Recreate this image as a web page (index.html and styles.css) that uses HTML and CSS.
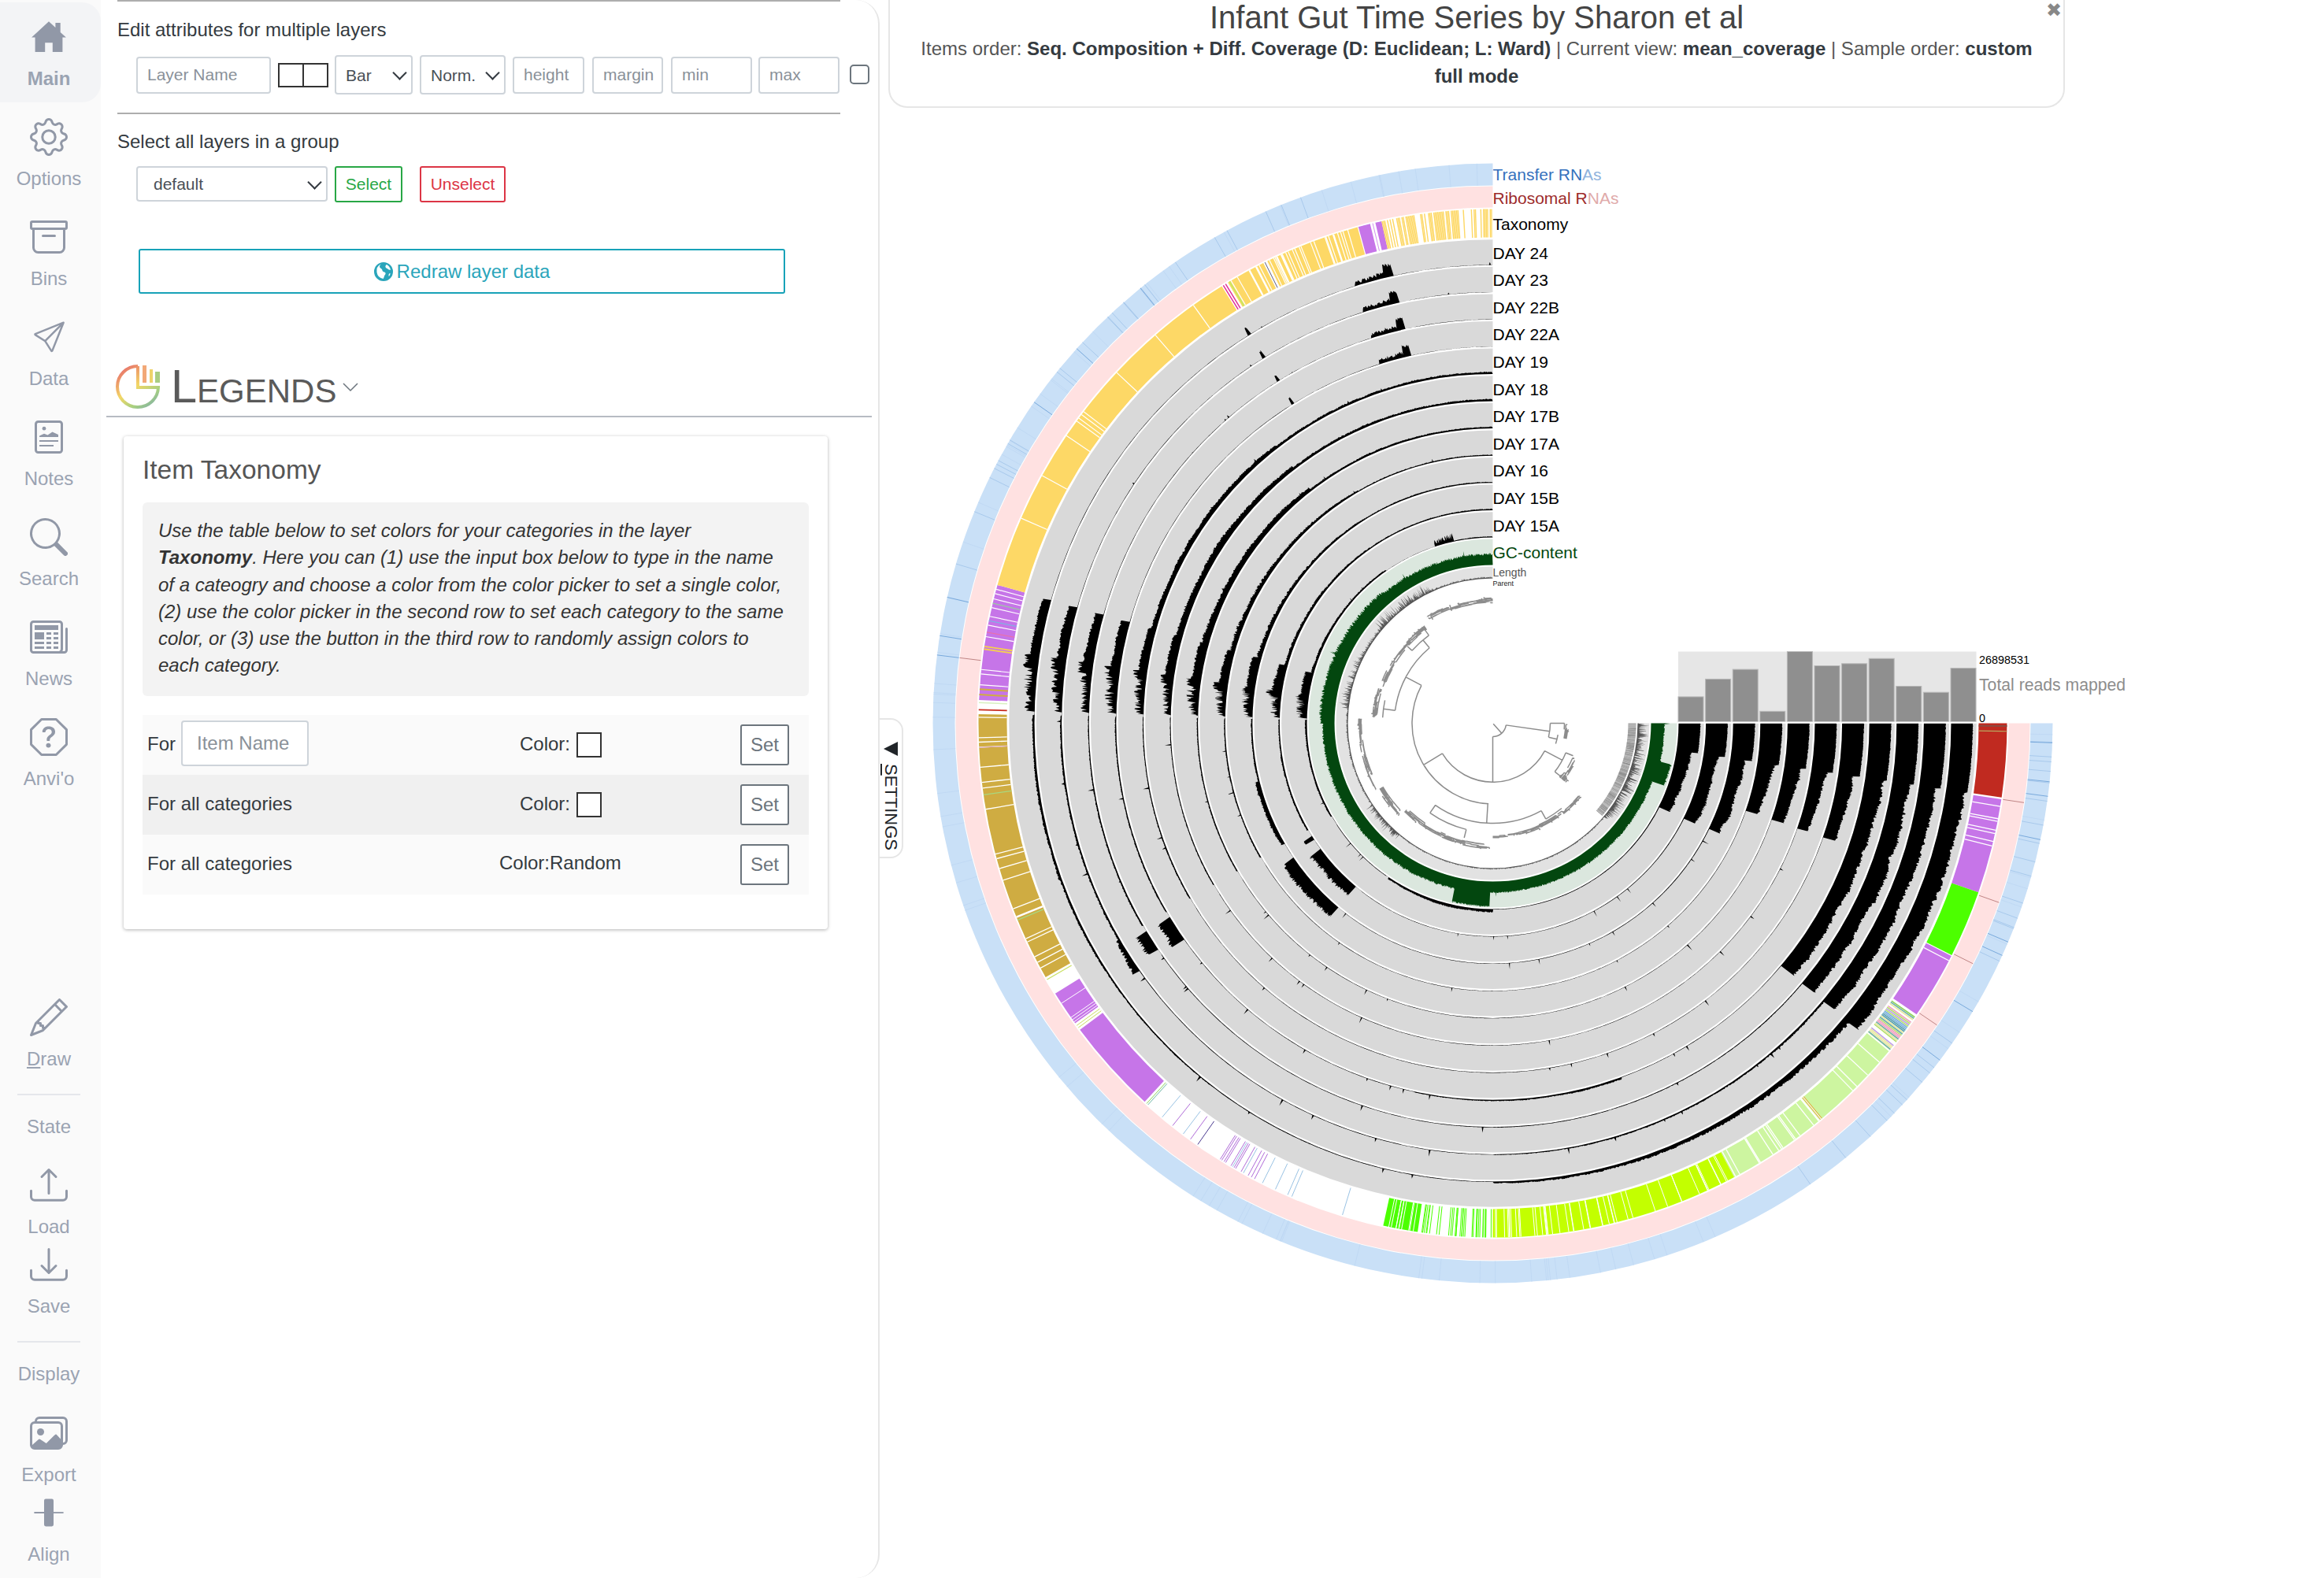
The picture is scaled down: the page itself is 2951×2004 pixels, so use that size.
FILE: index.html
```html
<!DOCTYPE html>
<html lang="en">
<head>
  <meta charset="UTF-8">
  <title>Infant Gut Time Series by Sharon et al</title>
  <link rel="stylesheet" href="styles.css">
</head>
<body>
<div class="page">
  <nav class="nav">
    <div class="navGroup">
      <a class="navItem active">
        <svg class="icon" viewBox="0 0 16 16"><path d="M2.200 14.300V8.200H.7L8 1.400l2.800 2.600V2h2.100v4l2.400 2.200h-1.500v6.100H9.600V10.400H6.400v3.900z"/></svg>
        <span>Main</span>
      </a>
      <a class="navItem">
        <svg class="icon" viewBox="0 0 16 16"><path d="M8 4.754a3.246 3.246 0 1 0 0 6.492 3.246 3.246 0 0 0 0-6.492zM5.754 8a2.246 2.246 0 1 1 4.492 0 2.246 2.246 0 0 1-4.492 0z"/><path d="M9.796 1.343c-.527-1.79-3.065-1.79-3.592 0l-.094.319a.873.873 0 0 1-1.255.52l-.292-.16c-1.64-.892-3.433.902-2.54 2.541l.159.292a.873.873 0 0 1-.52 1.255l-.319.094c-1.79.527-1.79 3.065 0 3.592l.319.094a.873.873 0 0 1 .52 1.255l-.16.292c-.892 1.64.901 3.434 2.541 2.54l.292-.159a.873.873 0 0 1 1.255.52l.094.319c.527 1.79 3.065 1.79 3.592 0l.094-.319a.873.873 0 0 1 1.255-.52l.292.16c1.64.893 3.434-.902 2.54-2.541l-.159-.292a.873.873 0 0 1 .52-1.255l.319-.094c1.79-.527 1.79-3.065 0-3.592l-.319-.094a.873.873 0 0 1-.52-1.255l.16-.292c.893-1.64-.902-3.433-2.541-2.54l-.292.159a.873.873 0 0 1-1.255-.52l-.094-.319zm-2.633.283c.246-.835 1.428-.835 1.674 0l.094.319a1.873 1.873 0 0 0 2.693 1.115l.291-.16c.764-.415 1.6.42 1.184 1.185l-.159.292a1.873 1.873 0 0 0 1.116 2.692l.318.094c.835.246.835 1.428 0 1.674l-.319.094a1.873 1.873 0 0 0-1.115 2.693l.16.291c.415.764-.42 1.6-1.185 1.184l-.291-.159a1.873 1.873 0 0 0-2.693 1.116l-.094.318c-.246.835-1.428.835-1.674 0l-.094-.319a1.873 1.873 0 0 0-2.692-1.115l-.292.16c-.764.415-1.6-.42-1.184-1.185l.159-.291A1.873 1.873 0 0 0 1.945 8.93l-.319-.094c-.835-.246-.835-1.428 0-1.674l.319-.094A1.873 1.873 0 0 0 3.06 4.377l-.16-.292c-.415-.764.42-1.6 1.185-1.184l.292.159a1.873 1.873 0 0 0 2.692-1.115l.094-.319z"/></svg>
        <span>Options</span>
      </a>
      <a class="navItem">
        <svg class="icon" viewBox="0 0 16 16"><path d="M0 2a1 1 0 0 1 1-1h14a1 1 0 0 1 1 1v2a1 1 0 0 1-1 1v7.500a2.500 2.500 0 0 1-2.500 2.500h-9A2.500 2.500 0 0 1 1 12.500V5a1 1 0 0 1-1-1V2zm2 3v7.500A1.500 1.500 0 0 0 3.500 14h9a1.500 1.500 0 0 0 1.500-1.500V5H2zm13-3H1v2h14V2zM5 7.500a.5.5 0 0 1 .5-.5h5a.5.5 0 0 1 0 1h-5a.5.5 0 0 1-.5-.5z"/></svg>
        <span>Bins</span>
      </a>
      <a class="navItem">
        <svg class="icon" viewBox="0 0 16 16"><g transform="translate(1.5 1.5) scale(.82)"><path d="M15.854.146a.5.5 0 0 1 .11.54l-5.819 14.547a.75.75 0 0 1-1.329.124l-3.178-4.995L.643 7.184a.75.75 0 0 1 .124-1.33L15.314.037a.5.5 0 0 1 .54.11ZM6.636 10.070l2.761 4.338L14.130 2.576 6.636 10.070Zm6.787-8.201L1.591 6.602l4.339 2.760 7.494-7.493Z"/></g></svg>
        <span>Data</span>
      </a>
      <a class="navItem">
        <svg class="icon" viewBox="0 0 16 16"><path d="M3.500 1h9A1.500 1.500 0 0 1 14 2.500v11a1.500 1.500 0 0 1-1.500 1.500h-9A1.500 1.500 0 0 1 2 13.500v-11A1.500 1.500 0 0 1 3.500 1zm0 1a.5.5 0 0 0-.5.5v11a.5.5 0 0 0 .5.5h9a.5.5 0 0 0 .5-.5v-11a.5.5 0 0 0-.5-.5h-9z"/><circle cx="6" cy="4.400" r=".8"/><path d="M4 7.500l2-.9 1.500.6 2-1.400 2.500 1.200v1H4zM4 9.300h8v.7H4zM4 11.300h6v.7H4z"/></svg>
        <span>Notes</span>
      </a>
      <a class="navItem">
        <svg class="icon" viewBox="0 0 16 16"><path d="M11.742 10.344a6.500 6.500 0 1 0-1.397 1.398h-.001c.030.040.062.078.098.115l3.850 3.850a1 1 0 0 0 1.415-1.414l-3.850-3.850a1.007 1.007 0 0 0-.115-.1zM12 6.500a5.500 5.500 0 1 1-11 0 5.500 5.500 0 0 1 11 0z"/></svg>
        <span>Search</span>
      </a>
      <a class="navItem">
        <svg class="icon" viewBox="0 0 16 16"><path d="M0 2.500A1.500 1.500 0 0 1 1.500 1h11A1.500 1.500 0 0 1 14 2.500v10.528c0 .3-.05.654-.238.972h.738a.5.5 0 0 0 .5-.5v-9a.5.5 0 0 1 1 0v9a1.500 1.500 0 0 1-1.500 1.500H1.497A1.497 1.497 0 0 1 0 13.500v-11zM12 14c.37 0 .654-.211.853-.441.092-.106.147-.279.147-.531V2.500a.5.5 0 0 0-.5-.5h-11a.5.5 0 0 0-.5.5v11c0 .278.223.5.497.5H12z"/><path d="M2 3h10v2H2V3zm0 3h4v3H2V6zm0 4h4v1H2v-1zm0 2h4v1H2v-1zm5-6h2v1H7V6zm3 0h2v1h-2V6zM7 8h2v1H7V8zm3 0h2v1h-2V8zm-3 2h2v1H7v-1zm3 0h2v1h-2v-1zm-3 2h2v1H7v-1zm3 0h2v1h-2v-1z"/></svg>
        <span>News</span>
      </a>
      <a class="navItem">
        <svg class="icon" viewBox="0 0 16 16"><path d="M4.540.146A.5.5 0 0 1 4.893 0h6.214a.5.5 0 0 1 .353.146l4.394 4.394a.5.5 0 0 1 .146.353v6.214a.5.5 0 0 1-.146.353l-4.394 4.394a.5.5 0 0 1-.353.146H4.893a.5.5 0 0 1-.353-.146L.146 11.460A.5.5 0 0 1 0 11.107V4.893a.5.5 0 0 1 .146-.353L4.540.146zM5.100 1 1 5.100v5.800L5.100 15h5.800l4.100-4.100V5.100L10.900 1H5.100z"/><path d="M5.255 5.786a.237.237 0 0 0 .241.247h.825c.138 0 .248-.113.266-.25.090-.656.540-1.134 1.342-1.134.686 0 1.314.343 1.314 1.168 0 .635-.374.927-.965 1.371-.673.489-1.206 1.060-1.168 1.987l.003.217a.25.25 0 0 0 .25.246h.811a.25.25 0 0 0 .25-.25v-.105c0-.718.273-.927 1.010-1.486.609-.463 1.244-.977 1.244-2.056 0-1.511-1.276-2.241-2.673-2.241-1.267 0-2.655.59-2.750 2.286zm1.557 5.763c0 .533.425.927 1.010.927.609 0 1.028-.394 1.028-.927 0-.552-.42-.94-1.029-.94-.584 0-1.009.388-1.009.94z"/></svg>
        <span>Anvi'o</span>
      </a>
    </div>
    <div class="navGroup bottom">
      <a class="navItem small">
        <svg class="icon" viewBox="0 0 16 16"><path d="M12.146.146a.5.5 0 0 1 .708 0l3 3a.5.5 0 0 1 0 .708l-10 10a.5.5 0 0 1-.168.11l-5 2a.5.5 0 0 1-.65-.65l2-5a.5.5 0 0 1 .11-.168l10-10zM11.207 2.500 13.500 4.793 14.793 3.500 12.500 1.207 11.207 2.500zm1.586 3L10.500 3.207 4 9.707V10h.5a.5.5 0 0 1 .5.5v.5h.5a.5.5 0 0 1 .5.5v.5h.293l6.500-6.500zm-9.761 5.175-.106.106-1.528 3.821 3.821-1.528.106-.106A.5.5 0 0 1 5 12.500V12h-.5a.5.5 0 0 1-.5-.5V11h-.5a.5.5 0 0 1-.468-.325z"/></svg>
        <span><u>D</u>raw</span>
      </a>
      <hr class="navLine">
      <div class="navTitle state">State</div>
      <a class="navItem small">
        <svg class="icon" viewBox="0 0 16 16"><path d="M.5 9.900a.5.5 0 0 1 .5.5v2.500a1 1 0 0 0 1 1h12a1 1 0 0 0 1-1v-2.500a.5.5 0 0 1 1 0v2.500a2 2 0 0 1-2 2H2a2 2 0 0 1-2-2v-2.500a.5.5 0 0 1 .5-.5z"/><path d="M7.646 1.146a.5.5 0 0 1 .708 0l3 3a.5.5 0 0 1-.708.708L8.500 2.707V11.500a.5.5 0 0 1-1 0V2.707L5.354 4.854a.5.5 0 1 1-.708-.708l3-3z"/></svg>
        <span>Load</span>
      </a>
      <a class="navItem small">
        <svg class="icon" viewBox="0 0 16 16"><path d="M.5 9.900a.5.5 0 0 1 .5.5v2.500a1 1 0 0 0 1 1h12a1 1 0 0 0 1-1v-2.500a.5.5 0 0 1 1 0v2.500a2 2 0 0 1-2 2H2a2 2 0 0 1-2-2v-2.500a.5.5 0 0 1 .5-.5z"/><path d="M7.646 11.854a.5.5 0 0 0 .708 0l3-3a.5.5 0 0 0-.708-.708L8.500 10.293V1.500a.5.5 0 0 0-1 0v8.793L5.354 8.146a.5.5 0 1 0-.708.708l3 3z"/></svg>
        <span>Save</span>
      </a>
      <hr class="navLine">
      <div class="navTitle display">Display</div>
      <a class="navItem small">
        <svg class="icon" viewBox="0 0 16 16"><path d="M4.502 9a1.500 1.500 0 1 0 0-3 1.500 1.500 0 0 0 0 3z"/><path d="M14.002 13a2 2 0 0 1-2 2h-10a2 2 0 0 1-2-2V5A2 2 0 0 1 2 3a2 2 0 0 1 2-2h10a2 2 0 0 1 2 2v8a2 2 0 0 1-1.998 2zM14 2H4a1 1 0 0 0-1 1h9.002a2 2 0 0 1 2 2v7A1 1 0 0 0 15 11V3a1 1 0 0 0-1-1zM2.002 4a1 1 0 0 0-1 1v8l2.646-2.354a.5.5 0 0 1 .63-.062l2.660 1.773 3.710-3.710a.5.5 0 0 1 .577-.094l1.777 1.947V5a1 1 0 0 0-1-1h-10z"/><path d="M1 13.500l2.800-2.500 2.800 1.800 3.800-3.800L13 11.200V14H1.500z"/></svg>
        <span>Export</span>
      </a>
      <a class="navItem small">
        <svg class="icon" viewBox="0 0 16 16"><path d="M6 2.900a.7.7 0 0 1 .7-.7h2.600a.7.7 0 0 1 .7.7v10.200a.7.7 0 0 1-.7.7H6.700a.7.7 0 0 1-.7-.7V8.300H1.800v-.6H6V2.900z"/><path d="M10 7.700h4.200v.6H10z"/></svg>
        <span>Align</span>
      </a>
    </div>
  </nav>

  <section class="panel">
    <div class="block">
      <hr class="rule top">
      <div class="blockTitle">Edit attributes for multiple layers</div>
      <div class="multiRow">
        <input class="field nameField" placeholder="Layer Name">
        <span class="splitBox"><i></i><i></i></span>
        <span class="selectWrap barSel"><select class="field"><option>Bar</option></select></span>
        <span class="selectWrap normSel"><select class="field"><option>Norm.</option></select></span>
        <input class="field heightField" placeholder="height">
        <input class="field marginField" placeholder="margin">
        <input class="field minField" placeholder="min">
        <input class="field maxField" placeholder="max">
        <span class="checkBox"></span>
      </div>
      <hr class="rule">
      <div class="blockTitle second">Select all layers in a group</div>
      <div class="groupRow">
        <span class="selectWrap groupSel"><select class="field"><option>default</option></select></span>
        <button class="btn selectBtn">Select</button>
        <button class="btn unselectBtn">Unselect</button>
      </div>
      <button class="btn redrawBtn">
        <svg class="globe" viewBox="0 0 16 16"><path d="M8 0a8 8 0 1 0 0 16A8 8 0 0 0 8 0zM5.800 1.500c-.5.7-1.200 1.400-1.100 2.400.1 1 1.100 1.300 1.800 1.900.6.600.3 1.400 1 2 .8.600 1.800.5 2.200 1.300.3.800-.5 1.500-.9 2.200-.3.600-.5 2.200-1.100 2.700a6.700 6.700 0 0 1-1.900-12.500zM10.500 2c1.700.800 3 2.400 3.500 4.300-.6.400-1.500.2-2-.3-.7-.8-1.900-.9-2.300-1.900-.3-.8.200-1.500.8-2.100zM13.800 9.500c-.2.900-.6 1.700-1.200 2.500-.4-.8-.3-1.800.2-2.400.3-.2.700-.2 1-.1z"/></svg>
        Redraw layer data
      </button>
    </div>

    <div class="legendHead">
      <svg class="legendLogo" viewBox="0 0 58 58">
        <defs>
          <linearGradient id="logoGrad" x1="0.2" y1="0" x2="0.9" y2="1">
            <stop offset="0" stop-color="#e8736b"/>
            <stop offset="0.45" stop-color="#f3d766"/>
            <stop offset="0.75" stop-color="#a8d080"/>
            <stop offset="1" stop-color="#7fb0a8"/>
          </linearGradient>
        </defs>
        <path d="M29 3A26 26 0 1 0 55 30H29V3" fill="none" stroke="url(#logoGrad)" stroke-width="4"/>
        <rect x="35" y="2" width="5" height="22" fill="#f2a877"/>
        <rect x="44" y="7" width="4" height="17" fill="#eed36a"/>
        <rect x="51" y="10" width="6" height="14" fill="#a9cd82"/>
      </svg>
      <h2 class="legendTitle">Legends</h2>
      <svg class="legendChevron" viewBox="0 0 20 12"><path d="M1 1l9 9 9-9" fill="none" stroke="#6c757d" stroke-width="1.500"/></svg>
    </div>
    <hr class="rule legendRule">

    <div class="card">
      <h3 class="cardTitle">Item Taxonomy</h3>
      <div class="info">
        Use the table below to set colors for your categories in the layer<br>
        <b>Taxonomy</b>. Here you can (1) use the input box below to type in the name<br>
        of a cateogry and choose a color from the color picker to set a single color,<br>
        (2) use the color picker in the second row to set each category to the same<br>
        color, or (3) use the button in the third row to randomly assign colors to<br>
        each category.
      </div>
      <div class="colorTable">
        <div class="colorRow">
          <div class="forCell">For <input class="field itemField" placeholder="Item Name"></div>
          <div class="colorCell">Color: <span class="swatch"></span></div>
          <div><button class="btn setBtn">Set</button></div>
        </div>
        <div class="colorRow even">
          <div class="forCell">For all categories</div>
          <div class="colorCell">Color: <span class="swatch"></span></div>
          <div><button class="btn setBtn">Set</button></div>
        </div>
        <div class="colorRow">
          <div class="forCell">For all categories</div>
          <div class="colorCell random">Color:Random</div>
          <div><button class="btn setBtn">Set</button></div>
        </div>
      </div>
    </div>
  </section>

  <main class="main">
    <div class="settingsTab">
      <span class="tabArrow"></span>
      <span class="tabText"><u>S</u>ETTINGS</span>
    </div>
    <header class="titleBox">
      <h1 class="title">Infant Gut Time Series by Sharon et al</h1>
      <p class="sub">Items order: <b>Seq. Composition + Diff. Coverage (D: Euclidean; L: Ward)</b> | Current view: <b>mean_coverage</b> | Sample order: <b>custom</b><br><b>full mode</b></p>
      <span class="closeBtn">&#10006;</span>
    </header>
    <svg id="tree" class="tree" viewBox="1117 137 1834 1867"></svg>
  </main>
</div>
<script src="chart.js"></script>
</body>
</html>
```
FILE: styles.css
```css
* {
  box-sizing: border-box;
}

html, body {
  margin: 0;
  height: 100%;
  background-color: #fff;
}

body {
  font-family: "Liberation Sans", Arial, sans-serif;
  font-size: 24px;
  color: #343a40;
  overflow: hidden;
}

.page {
  display: flex;
  height: 2004px;
}

/* left icon bar */
.nav {
  width: 128px;
  flex: none;
  background-color: #fafafa;
  display: flex;
  flex-direction: column;
  justify-content: space-between;
  padding: 3px 0 15px;
  color: #9aa3b2;
}

.navGroup {
  display: flex;
  flex-direction: column;
  align-items: center;
  padding-right: 4px;
}

.navItem {
  width: 100%;
  height: 127px;
  padding-top: 20px;
  display: flex;
  flex-direction: column;
  align-items: center;
  line-height: 30px;
  gap: 14px;
}

.navItem.small {
  height: 92px;
  padding-top: 0;
}

.navItem.small + .navItem.small {
  margin-top: 9px;
}

.navItem.active {
  width: 128px;
  margin-right: -4px;
  padding-right: 4px;
  background-color: #f3f4f6;
  border-radius: 0 24px 24px 0;
  font-weight: bold;
}

.icon {
  width: 48px;
  height: 48px;
  fill: #9198a7;
  flex: none;
}

.navLine {
  width: 80px;
  height: 2px;
  margin: 29px 0 0;
  border: 0;
  background-color: #e5e7eb;
}

.navTitle {
  line-height: 30px;
  margin-top: 25px;
}

.navTitle.state {
  margin-bottom: 35px;
}

.navTitle.display {
  margin-bottom: 36px;
}

/* settings panel */
.panel {
  width: 989px;
  flex: none;
  padding-left: 7px;
  border-right: 2px solid #e6e6e6;
  border-radius: 0 30px 30px 0;
}

.block {
  margin-left: 14px;
  width: 918px;
}

.rule {
  height: 2px;
  margin: 0;
  border: 0;
  background-color: #adadad;
}

.blockTitle {
  line-height: 30px;
  margin-top: 21px;
}

.blockTitle.second {
  margin-top: 20px;
}

.multiRow {
  height: 50px;
  margin: 17px 0 23px;
  padding-left: 24px;
  display: flex;
  align-items: center;
  position: relative;
}

.field {
  height: 47px;
  border: 2px solid #ced4da;
  border-radius: 4px;
  background-color: #fff;
  font-family: inherit;
  font-size: 21px;
  color: #495057;
  padding: 0 0 0 12px;
  outline: none;
}

.field::placeholder {
  color: #8a9199;
  opacity: 1;
}

select.field {
  appearance: none;
  width: 100%;
  height: 100%;
}

.groupSel select.field {
  padding-left: 20px;
}

.nameField { width: 171px; margin-right: 9px; }
.heightField { width: 91px; margin-right: 10px; }
.marginField { width: 90px; margin-right: 10px; }
.minField { width: 103px; margin-right: 8px; }
.maxField { width: 103px; }

.splitBox {
  width: 64px;
  height: 31px;
  margin-right: 8px;
  display: flex;
  border: 2px solid #333;
}

.splitBox i {
  flex: 1;
}

.splitBox i + i {
  border-left: 2px solid #333;
}

.selectWrap {
  position: relative;
  display: block;
}

.selectWrap::after {
  content: '';
  position: absolute;
  right: 10px;
  top: 50%;
  width: 11px;
  height: 11px;
  margin-top: -9px;
  border-right: 2px solid #343a40;
  border-bottom: 2px solid #343a40;
  transform: rotate(45deg);
}

.barSel { width: 99px; height: 50px; margin-right: 9px; }
.normSel { width: 109px; height: 50px; margin-right: 9px; }
.groupSel { width: 243px; height: 45px; margin-right: 9px; }

.checkBox {
  position: absolute;
  left: 930px;
  top: 12px;
  width: 25px;
  height: 25px;
  border: 2px solid #6c757d;
  border-radius: 5px;
}

.groupRow {
  height: 45px;
  margin-top: 16px;
  padding-left: 24px;
  display: flex;
  align-items: center;
}

.btn {
  background-color: #fff;
  border: 2px solid #6c757d;
  border-radius: 3px;
  font-family: inherit;
  font-size: 21px;
  color: #6c757d;
  padding: 0;
}

.selectBtn {
  width: 86px;
  height: 46px;
  margin-right: 22px;
  border-color: #28a745;
  color: #28a745;
}

.unselectBtn {
  width: 109px;
  height: 46px;
  border-color: #dc3545;
  color: #dc3545;
}

.redrawBtn {
  display: flex;
  align-items: center;
  justify-content: center;
  gap: 5px;
  width: 821px;
  height: 57px;
  margin: 60px 0 0 27px;
  border-color: #17a2b8;
  color: #2aa5bb;
  font-size: 24px;
}

.globe {
  width: 24px;
  height: 24px;
  fill: #2aa5bb;
}

.legendHead {
  height: 58px;
  margin: 89px 0 8px 11px;
  display: flex;
  align-items: center;
}

.legendLogo {
  width: 58px;
  height: 58px;
  margin-right: 13px;
}

.legendTitle {
  margin: -1px 0 0;
  font-size: 59.5px;
  line-height: 58px;
  font-weight: normal;
  font-variant: small-caps;
  color: #5a5a5a;
}

.legendChevron {
  width: 20px;
  height: 12px;
  margin: 2px 0 0 8px;
}

.legendRule {
  width: 972px;
  background-color: #b7bbc3;
}

.card {
  width: 894px;
  height: 626px;
  margin: 24px 0 0 22px;
  padding: 23px 24px 0;
  border-radius: 4px;
  background-color: #fff;
  box-shadow: 0 1px 4px rgba(0, 0, 0, 0.3);
}

.cardTitle {
  margin: 0;
  font-size: 33.5px;
  line-height: 40px;
  font-weight: normal;
  color: #555;
}

.info {
  height: 246px;
  margin-top: 21px;
  padding: 19px 16px 0 20px;
  background-color: #f3f3f3;
  border-radius: 6px;
  font-style: italic;
  line-height: 34.3px;
  color: #333;
}

.colorTable {
  margin-top: 24px;
}

.colorRow {
  height: 76px;
  display: grid;
  grid-template-columns: 453px 306px 87px;
  align-items: center;
  background-color: #fafafa;
}

.colorRow.even {
  background-color: #f0f0f0;
}

.forCell {
  margin-top: -2px;
  padding-left: 6px;
  display: flex;
  align-items: center;
  gap: 7px;
}

.colorCell {
  margin-top: -2px;
  padding-left: 26px;
  display: flex;
  align-items: center;
  gap: 8px;
}

.colorCell.random {
  margin-top: -5px;
  padding-left: 0;
}

.itemField {
  width: 162px;
  height: 58px;
  margin-top: -2px;
  font-size: 24px;
  padding: 0 18px;
}

.swatch {
  width: 32px;
  height: 32px;
  margin-top: 2px;
  background-color: #fff;
  border: 2px solid #333;
}

.setBtn {
  display: block;
  width: 62px;
  height: 52px;
  font-size: 24px;
}

/* drawing area */
.main {
  flex: 1;
  position: relative;
}

.settingsTab {
  position: absolute;
  left: 0;
  top: 912px;
  z-index: 2;
  width: 30px;
  height: 178px;
  padding-top: 28px;
  background-color: #fff;
  border: 2px solid #e6e6e6;
  border-left: 0;
  border-radius: 0 16px 16px 0;
  display: flex;
  flex-direction: column;
  align-items: center;
  gap: 10px;
}

.tabArrow {
  width: 0;
  height: 0;
  border-style: solid;
  border-width: 9px 18px 9px 0;
  border-color: transparent #212529 transparent transparent;
}

.tabText {
  writing-mode: vertical-rl;
  font-size: 22px;
  line-height: 22px;
  color: #212529;
}

.titleBox {
  position: relative;
  width: 1494px;
  height: 137px;
  margin-left: 11px;
  padding: 0 35px;
  border: 2px solid #e6e6e6;
  border-top: 0;
  border-radius: 0 0 24px 24px;
  text-align: center;
}

.title {
  margin: 0;
  font-size: 40px;
  line-height: 44px;
  font-weight: normal;
  color: #444;
}

.sub {
  margin: 0;
  line-height: 35px;
  color: #555;
}

.sub b {
  color: #343a40;
}

.closeBtn {
  position: absolute;
  right: 2px;
  top: 0;
  font-family: "DejaVu Sans", sans-serif;
  font-size: 24px;
  line-height: 26px;
  color: #888;
}

.tree {
  display: block;
  width: 1834px;
  height: 1867px;
  font-family: "Liberation Sans", Arial, sans-serif;
}
```
FILE: chart.js
```js
// circular phylogram, drawn from the numbers below
const svg = document.getElementById('tree')
const NS = 'http://www.w3.org/2000/svg'
const cx = 1895.5
const cy = 918.5

let seed = 4711
function rnd() {
  seed = (seed * 16807) % 2147483647
  return seed / 2147483647
}

function pt(r, a) {
  const t = a * Math.PI / 180
  return (cx + r * Math.cos(t)).toFixed(2) + ' ' + (cy + r * Math.sin(t)).toFixed(2)
}

function add(tag, attrs) {
  const el = document.createElementNS(NS, tag)
  for (const k in attrs) el.setAttribute(k, attrs[k])
  svg.append(el)
  return el
}

function wedge(r0, r1, a0, a1) {
  const large = a1 - a0 > 180 ? 1 : 0
  return 'M' + pt(r1, a0) + 'A' + r1 + ' ' + r1 + ' 0 ' + large + ' 1 ' + pt(r1, a1) +
    'L' + pt(r0, a1) + 'A' + r0 + ' ' + r0 + ' 0 ' + large + ' 0 ' + pt(r0, a0) + 'Z'
}

function fillWedge(r0, r1, a0, a1, color) {
  add('path', { d: wedge(r0, r1, a0, a1), fill: color })
}

function radials(r0, r1, angles, color, width) {
  let d = ''
  angles.forEach(a => { d += 'M' + pt(r0, a) + 'L' + pt(r1, a) })
  add('path', { d: d, stroke: color, 'stroke-width': width, fill: 'none' })
}

function randomAngles(a0, a1, n) {
  const out = []
  for (let i = 0; i < n; i++) out.push(a0 + rnd() * (a1 - a0))
  return out
}

// ---- outer rings
fillWedge(683, 711, 0, 270, '#c9e0f7')
radials(683, 711, randomAngles(0, 270, 90), '#bcd6f2', 0.7)
radials(683, 711, randomAngles(0, 60, 26).concat(randomAngles(195, 250, 24)), '#a0c3e8', 0.8)
radials(683, 711, [2, 6, 7.5, 12, 23, 24.5, 31, 37, 187, 189, 193, 215, 222, 231], '#6fa3d8', 0.9)

fillWedge(655, 682, 0, 270, '#ffe1e1')
radials(655, 682, [8.5, 19.5, 26.6, 34.2, 187], '#b87a7a', 0.9)

// ---- taxonomy ring
const T0 = 617
const T1 = 653
const PURPLE = '#c675e8'
const YELLOW = '#fdd866'
const GOLD = '#cfac42'
const LIME = '#c3ff00'
const PALE = '#cdf5a0'
const GREEN = '#4cff00'

const sections = [
  [0, 8.3, '#c02a20'],
  [8.5, 19.2, PURPLE],
  [19.2, 26.8, GREEN],
  [26.9, 34.5, PURPLE],
  [39.4, 62, PALE],
  [62, 90, LIME],
  [98.4, 102.3, GREEN],
  [132.6, 143.4, PURPLE],
  [144.3, 148.3, PURPLE],
  [150.4, 181, GOLD],
  [182.6, 195.6, PURPLE],
  [195.6, 238.2, YELLOW],
  [239, 243.5, YELLOW],
  [244, 254.8, YELLOW],
  [254.8, 256.2, PURPLE],
  [256.8, 257.5, PURPLE]
]
sections.forEach(s => fillWedge(T0, T1, s[0], s[1], s[2]))

const lineSets = [
  [[0.9], '#b8a860', 1.2],
  [[0.3], '#8a4a40', 2],
  [[9.3, 10.7, 11, 12, 12.4, 13.3, 13.8, 27.5], '#fff', 1.3],
  [randomAngles(39.5, 55, 10).concat(randomAngles(50, 62, 12)), '#fff', 1.3],
  [randomAngles(62, 90, 36).concat(randomAngles(80, 90, 10)), '#fff', 1],
  [[50.2, 50.4], '#e8a030', 1],
  [randomAngles(90, 98.4, 32), GREEN, 1],
  [randomAngles(98.4, 102.3, 10), '#fff', 1],
  [[107, 113, 113.5, 115, 116.6, 119, 120.4, 127, 130], '#7fb2dc', 0.8],
  [[117.6, 118, 118.4, 119.3, 120, 120.2, 120.6, 121.3, 121.5, 121.8, 122, 126, 128.5], '#b06cd8', 1],
  [[125], '#4a3a90', 1],
  [[132.3], '#8ed45a', 1],
  [[132.1], '#70b8a8', 1],
  [[144.5, 144.8, 145.1, 147], '#fff', 1],
  [[143.7, 144], '#c8e060', 1],
  [[150.1], '#c8e060', 1.2],
  [randomAngles(151, 181, 20), '#fff', 1.3],
  [[172, 157.5], '#a8d880', 1.2],
  [[177.3], '#d8a0b0', 1],
  [[181.5], '#c82a1e', 1.8],
  [[181.9], '#fff', 1],
  [[182.3], '#d8f0c0', 1.5],
  [[183.2, 183.8], GOLD, 2],
  [[184.3, 185.5, 186, 189.7, 191, 192, 193, 194, 194.6, 195.1], '#fff', 1.2],
  [[188.3, 188.6], '#f5cf50', 1.8],
  [[190.2], '#f070a0', 1],
  [[191.5], '#70c0e0', 1],
  [[193.5], '#90e090', 1],
  [[203.5, 208.8, 214, 216, 216.4, 216.9, 217.3, 223, 229, 234.4], '#fff', 1.2],
  [randomAngles(239, 243.5, 8), '#fff', 1.2],
  [randomAngles(244, 254.8, 26), '#fff', 1.2],
  [[238.4, 238.7], '#e0309a', 1.5],
  [[239.2], '#c8e860', 2],
  [[243.7], '#5a5a80', 1]
]
lineSets.forEach(l => radials(T0, T1, l[0], l[1], l[2]))

// mixed stripes
const mix = ['#7fb2dc', '#8ed45a', '#f0a0c0', '#6fb0a8', '#b8e070', '#c0a0e8', '#e8e8a0', '#5aa0b0', '#fff']
for (let a = 34.6; a < 39.4; a += 0.18) {
  fillWedge(T0, T1, a, a + 0.15, mix[Math.floor(rnd() * mix.length)])
}
// sparse yellow near the end
for (let a = 257.5; a < 270; a += 0.15) {
  if (rnd() < (a > 266 ? 0.45 : 0.72)) fillWedge(T0, T1, a, a + 0.13, YELLOW)
}
radials(T0, T1, [255.5, 256.5, 257.1], PURPLE, 0.8)

// ---- one band: a polygon whose outer edge follows the values
function band(r0, r1, color, valueAt, step) {
  const depth = r1 - r0
  let d = 'M' + pt(r0, 0)
  for (let a = 0; a <= 270; a += step) {
    d += 'L' + pt(r0 + depth * Math.min(1, valueAt(a)), a)
  }
  d += 'L' + pt(r0, 270) + 'A' + r0 + ' ' + r0 + ' 0 1 0 ' + pt(r0, 0) + 'Z'
  add('path', { d: d, fill: color })
}

function look(segs, a) {
  for (let i = 0; i < segs.length; i++) {
    const s = segs[i]
    if (a >= s[0] && a < s[1]) {
      const t = (a - s[0]) / (s[1] - s[0])
      return { h: s[2] + (s[3] - s[2]) * t, n: s[4] || 0.14 }
    }
  }
  return { h: 0.005, n: 0.3 }
}

const SPIKY = 1.3
function sameStart(end, h) {
  return [[0, 8.3, 0.86, 0.84, 0.03], [8.3, end, h, h - 0.12, 0.16]]
}
const leftBlock = [
  [181.5, 187, 0.22, 0.3, SPIKY],
  [187, 188.5, 0.46, 0.5, 0.5],
  [188.5, 195.6, 0.36, 0.32, 0.25]
]
// small peaks that the four outer samples share
const peaks = [[237.8, 238.2, 0.28, 0.28, 0.3], [252.5, 256.4, 0.14, 0.18, 0.9], [256.4, 257.5, 0.46, 0.42, 0.3]]

// DAY 15A first, DAY 24 last
const layers = [
  sameStart(26.7, 0.6).concat([[26.7, 90, 0.03, 0.015], [90, 124, 0.12, 0.07, 0.4], [125, 147, 0.02, 0.02], [150, 181, 0.06, 0.07, 0.5], [195.6, 235, 0.1, 0.05, 0.5], [252, 258, 0.16, 0.24, 1], [258, 270, 0.03, 0.04, 0.5]]),
  sameStart(26.5, 0.6).concat([[26.5, 90, 0.025, 0.01], [90, 128, 0.012, 0.012], [130, 143.8, 0.46, 0.52, 0.3], [147, 148, 0.36, 0.36], [150, 181, 0.06, 0.05, 0.5], [195.6, 235, 0.12, 0.06, 0.5], [235, 270, 0.05, 0.05, 0.5]]),
  sameStart(26, 0.6).concat([[26, 90, 0.025, 0.01], [90, 128, 0.012, 0.012], [130, 146, 0.48, 0.52, 0.3], [150, 166, 0.16, 0.18, 0.4], [166, 181, 0.07, 0.05, 0.5], [195.6, 238, 0.16, 0.06, 0.5], [238, 270, 0.05, 0.04, 0.5]]),
  sameStart(19, 0.6).concat([[19, 90, 0.012, 0.01], [90, 148, 0.012, 0.012], [150, 181, 0.05, 0.04, 0.5], [195.6, 240, 0.2, 0.06, 0.5], [240, 270, 0.04, 0.04, 0.5]]),
  sameStart(19, 0.6).concat([[19, 90, 0.01, 0.01], [90, 148, 0.012, 0.012], [150, 181, 0.05, 0.04, 0.5], [195.6, 232, 0.26, 0.16, 0.3], [232, 270, 0.08, 0.06, 0.4]]),
  sameStart(19, 0.6).concat([[19, 90, 0.01, 0.01], [90, 148, 0.012, 0.012], [150, 181, 0.04, 0.03, 0.5], [195.6, 232, 0.26, 0.16, 0.3], [232, 270, 0.1, 0.08, 0.4]]),
  sameStart(19, 0.6).concat([[19, 100, 0.01, 0.01], [100, 148, 0.012, 0.012], [150, 181, 0.05, 0.03, 0.5], [195.6, 232, 0.22, 0.14, 0.3], [232, 270, 0.1, 0.08, 0.4]]),
  sameStart(40, 0.72).concat(peaks, [[40, 70, 0.012, 0.012], [70, 102, 0.08, 0.03, 0.4], [102, 145, 0.012, 0.012], [145, 149, 0.56, 0.56, 0.3], [150, 181, 0.05, 0.04, 0.5], [195.6, 237, 0.012, 0.01]]),
  sameStart(40, 0.72).concat(peaks, [[40, 90, 0.03, 0.02, 0.5], [90, 145, 0.015, 0.02], [146, 149, 0.46, 0.46, 0.4], [150, 181, 0.06, 0.04, 0.5], [195.6, 237, 0.012, 0.01]]),
  sameStart(40, 0.72).concat(peaks, [[40, 90, 0.08, 0.03, 0.5], [90, 145, 0.015, 0.02], [145, 150, 0.26, 0.16, 0.6], [150, 181, 0.08, 0.06, 0.5], [195.6, 237, 0.012, 0.01]]),
  sameStart(40, 0.72).concat(peaks, [[40, 90, 0.24, 0.06, 0.4], [90, 128, 0.015, 0.03], [128, 160, 0.04, 0.08, 0.5], [160, 181, 0.1, 0.08, 0.5], [195.6, 237, 0.012, 0.01]])
]

layers.forEach((segs, k) => {
  const r0 = 236 + 34.6 * k
  const r1 = r0 + 32.3
  const all = segs.concat(leftBlock)
  let walk = 0
  fillWedge(r0, r1, 0, 270, '#d9d9d9')
  band(r0, r1, '#000', a => {
    const v = look(all, a)
    walk = walk * 0.97 + (rnd() - 0.5) * 0.06
    let h = v.h * (1 - v.n / 2 + v.n * rnd()) * (1 + (a > 8.3 ? walk : 0))
    if (a > 26 && a < 181 && rnd() < 0.006) h = Math.max(h, 0.1 + 0.2 * rnd())
    if (a > 195 && rnd() < 0.005) h += 0.12 * rnd()
    return h
  }, 0.12)
})

// ---- GC-content
fillWedge(201, 234, 0, 270, '#dbe7de')
const gcSegs = [
  [0, 13, 0.52, 0.52, 0.12], [13, 20, 0.94, 0.92, 0.08], [20, 91, 0.44, 0.42, 0.16],
  [91, 103, 0.96, 0.94, 0.08], [103, 180, 0.44, 0.46, 0.2], [180, 230, 0.56, 0.5, 0.24], [230, 270, 0.44, 0.42, 0.24]
]
band(201, 234, '#03470f', a => {
  const h = look(gcSegs, a)
  return h.h * (1 - h.n / 2 + h.n * rnd()) + (rnd() < 0.006 ? 0.2 : 0)
}, 0.15)

// ---- Length
fillWedge(184, 199, 0, 270, '#e2e2e2')
const lenSegs = [
  [0, 40, 0.9, 0.9], [40, 130, 0.08, 0.08], [130, 146, 0.6, 0.6], [146, 186, 0.12, 0.12],
  [186, 206, 0.6, 0.6], [206, 220, 0.3, 0.3], [220, 246, 0.75, 0.6], [246, 270, 0.12, 0.12]
]
band(184, 199, '#555', a => {
  const h = look(lenSegs, a).h
  return 0.05 + h * rnd() * rnd() * 1.5
}, 0.12)

// ---- Parent, only the first part of the circle has one
for (let a = 0; a < 40; a += 0.16) {
  const g = 110 + Math.floor(rnd() * 70)
  fillWedge(172, 182, a, a + 0.17, 'rgb(' + g + ',' + g + ',' + g + ')')
}

// ---- dendrogram
let tree = ''
function arc(r, a0, a1) {
  const large = a1 - a0 > 180 ? 1 : 0
  tree += 'M' + pt(r, a0) + 'A' + r + ' ' + r + ' 0 ' + large + ' 1 ' + pt(r, a1)
}
function rad(a, r0, r1) {
  tree += 'M' + pt(r0, a) + 'L' + pt(r1, a)
}
function strip(a0, a1, r0, r1, n) {
  for (let i = 0; i < n; i++) {
    const a = a0 + rnd() * (a1 - a0)
    const w = 2 + rnd() * 7
    const r = r0 + rnd() * (r1 - r0)
    arc(r, a, Math.min(a1, a + w))
    rad(a, r, r + rnd() * 2.5)
  }
}

rad(48, 1, 17)
arc(17, 8, 90)
rad(8, 17, 73)
rad(90, 17, 74.7)
arc(74.7, 28, 149)
rad(149, 74.7, 102.5)
arc(102.5, 93, 208)
rad(208, 102.5, 125)
arc(125, 187.5, 230)
rad(187.5, 125, 140)
arc(140, 183, 192)
rad(230, 125, 138)
arc(138, 222, 234)
rad(222, 138, 146)
rad(234, 138, 150)
rad(93.5, 102.5, 127)
arc(127, 61, 125)
rad(61, 127, 139)
rad(125, 127, 139)
arc(139, 51, 61)
rad(104, 139, 150)
arc(139, 104, 125)
rad(28, 74.7, 100)
arc(100, 22, 38)
rad(22, 100, 110)
rad(38, 100, 110)
arc(73, 0, 14)
rad(0, 73, 91)
rad(14, 73, 84)
arc(84, 10, 18)
arc(91, 0, 5)
arc(155, 240, 250)
rad(240, 152, 158)
rad(250, 152, 160)

strip(238, 270, 153, 159, 30)
strip(197, 235, 145, 151, 34)
strip(183, 197, 147, 153, 20)
strip(150, 182, 166, 171, 30)
strip(135, 150, 161, 168, 18)
strip(91, 135, 153, 159, 46)
strip(50, 90, 141, 146, 34)
strip(40, 52, 142, 146, 12)
strip(0, 12, 92, 96, 14)
strip(22, 39, 109, 119, 20)
add('path', { d: tree, fill: 'none', stroke: '#8c8c8c', 'stroke-width': 1.5 })

// ---- bars above the layers
const base = 916.7
add('rect', { x: 2131, y: 827.5, width: 378.5, height: base - 827.5, fill: '#e6e6e6' })
const reads = [31.8, 54.3, 66.6, 13.4, 89.2, 71.2, 73.9, 80.4, 45.2, 37.5, 68.1]
reads.forEach((h, i) => {
  add('rect', {
    x: 2131 + 34.6 * i, y: base - h, width: 32, height: h,
    fill: '#8f8f8f', stroke: '#b8b8b8', 'stroke-width': 1
  })
})
add('rect', { x: 2131, y: base, width: 378.5, height: 2, fill: '#fff' })

function label(text, x, y, size, color) {
  const t = add('text', { x: x, y: y, 'font-size': size, fill: color, 'dominant-baseline': 'central' })
  t.textContent = text
  return t
}

function fading(text, rest, y, color, pale) {
  const t = label(text, 1895.5, y, 21, color)
  const s = document.createElementNS(NS, 'tspan')
  s.setAttribute('fill', pale)
  s.textContent = rest
  t.append(s)
}

label('26898531', 2513, 838, 14.4, '#000')
label('Total reads mapped', 2513, 869, 21.2, '#8d8d8d')
label('0', 2513, 912, 14.4, '#000')

fading('Transfer RN', 'As', 221, '#3570bd', '#8fb3dd')
fading('Ribosomal R', 'NAs', 251, '#9d2b2b', '#e0aaaa')
label('Taxonomy', 1895.5, 284, 21, '#000')

const days = ['DAY 24', 'DAY 23', 'DAY 22B', 'DAY 22A', 'DAY 19', 'DAY 18', 'DAY 17B', 'DAY 17A', 'DAY 16', 'DAY 15B', 'DAY 15A']
days.forEach((d, i) => label(d, 1895.5, 321 + 34.6 * i, 21, '#000'))
label('GC-content', 1895.5, 701, 21, '#03470f')
label('Length', 1895.5, 727, 14, '#555')
label('Parent', 1895.5, 741, 9, '#222')
```
